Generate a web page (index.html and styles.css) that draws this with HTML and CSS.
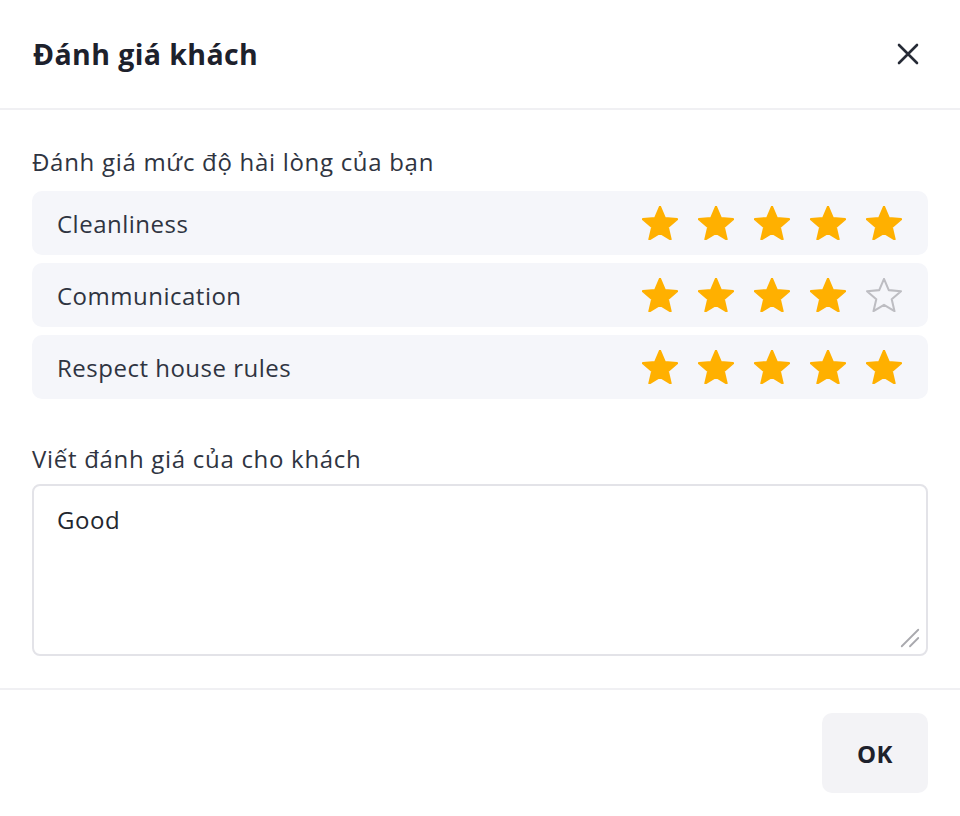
FILE: index.html
```html
<!DOCTYPE html>
<html lang="vi">
<head>
<meta charset="utf-8">
<link rel="stylesheet" href="styles.css">
</head>
<body>
<div class="dialog">
  <header class="head">
    <h1 class="title">Đánh giá khách</h1>
    <button class="close" aria-label="Đóng">
      <svg width="24" height="24" viewBox="0 0 24 24"><path d="M3 3L21 21M21 3L3 21" stroke="#262b36" stroke-width="2.6" stroke-linecap="round" fill="none"/></svg>
    </button>
  </header>
  <main class="body">
    <div class="label">Đánh giá mức độ hài lòng của bạn</div>
    <div class="rows">
      <div class="row"><span>Cleanliness</span>
        <div class="stars">
          <svg class="star on" viewBox="1.5 1.5 21 20"><path d="M12 17.27L18.18 21l-1.64-7.03L22 9.24l-7.19-.61L12 2 9.19 8.63 2 9.24l5.46 4.73L5.82 21z"/></svg>
          <svg class="star on" viewBox="1.5 1.5 21 20"><path d="M12 17.27L18.18 21l-1.64-7.03L22 9.24l-7.19-.61L12 2 9.19 8.63 2 9.24l5.46 4.73L5.82 21z"/></svg>
          <svg class="star on" viewBox="1.5 1.5 21 20"><path d="M12 17.27L18.18 21l-1.64-7.03L22 9.24l-7.19-.61L12 2 9.19 8.63 2 9.24l5.46 4.73L5.82 21z"/></svg>
          <svg class="star on" viewBox="1.5 1.5 21 20"><path d="M12 17.27L18.18 21l-1.64-7.03L22 9.24l-7.19-.61L12 2 9.19 8.63 2 9.24l5.46 4.73L5.82 21z"/></svg>
          <svg class="star on" viewBox="1.5 1.5 21 20"><path d="M12 17.27L18.18 21l-1.64-7.03L22 9.24l-7.19-.61L12 2 9.19 8.63 2 9.24l5.46 4.73L5.82 21z"/></svg>
        </div>
      </div>
      <div class="row"><span>Communication</span>
        <div class="stars">
          <svg class="star on" viewBox="1.5 1.5 21 20"><path d="M12 17.27L18.18 21l-1.64-7.03L22 9.24l-7.19-.61L12 2 9.19 8.63 2 9.24l5.46 4.73L5.82 21z"/></svg>
          <svg class="star on" viewBox="1.5 1.5 21 20"><path d="M12 17.27L18.18 21l-1.64-7.03L22 9.24l-7.19-.61L12 2 9.19 8.63 2 9.24l5.46 4.73L5.82 21z"/></svg>
          <svg class="star on" viewBox="1.5 1.5 21 20"><path d="M12 17.27L18.18 21l-1.64-7.03L22 9.24l-7.19-.61L12 2 9.19 8.63 2 9.24l5.46 4.73L5.82 21z"/></svg>
          <svg class="star on" viewBox="1.5 1.5 21 20"><path d="M12 17.27L18.18 21l-1.64-7.03L22 9.24l-7.19-.61L12 2 9.19 8.63 2 9.24l5.46 4.73L5.82 21z"/></svg>
          <svg class="star off" viewBox="1.5 1.5 21 20"><path d="M12 17.27L18.18 21l-1.64-7.03L22 9.24l-7.19-.61L12 2 9.19 8.63 2 9.24l5.46 4.73L5.82 21z"/></svg>
        </div>
      </div>
      <div class="row"><span>Respect house rules</span>
        <div class="stars">
          <svg class="star on" viewBox="1.5 1.5 21 20"><path d="M12 17.27L18.18 21l-1.64-7.03L22 9.24l-7.19-.61L12 2 9.19 8.63 2 9.24l5.46 4.73L5.82 21z"/></svg>
          <svg class="star on" viewBox="1.5 1.5 21 20"><path d="M12 17.27L18.18 21l-1.64-7.03L22 9.24l-7.19-.61L12 2 9.19 8.63 2 9.24l5.46 4.73L5.82 21z"/></svg>
          <svg class="star on" viewBox="1.5 1.5 21 20"><path d="M12 17.27L18.18 21l-1.64-7.03L22 9.24l-7.19-.61L12 2 9.19 8.63 2 9.24l5.46 4.73L5.82 21z"/></svg>
          <svg class="star on" viewBox="1.5 1.5 21 20"><path d="M12 17.27L18.18 21l-1.64-7.03L22 9.24l-7.19-.61L12 2 9.19 8.63 2 9.24l5.46 4.73L5.82 21z"/></svg>
          <svg class="star on" viewBox="1.5 1.5 21 20"><path d="M12 17.27L18.18 21l-1.64-7.03L22 9.24l-7.19-.61L12 2 9.19 8.63 2 9.24l5.46 4.73L5.82 21z"/></svg>
        </div>
      </div>
    </div>
    <div class="label label2">Viết đánh giá của cho khách</div>
    <div class="field">
      <textarea class="review">Good</textarea>
      <svg class="grip" width="24" height="24" viewBox="0 0 24 24"><path d="M3 21L21 3M12 21L21 12" stroke="#a9a9ae" stroke-width="2" stroke-linecap="round" fill="none"/></svg>
    </div>
  </main>
  <footer class="foot">
    <button class="ok">OK</button>
  </footer>
</div>
</body>
</html>
```
FILE: styles.css
```css
html, body {
  margin: 0;
  padding: 0;
  background: #ffffff;
}
body {
  font-family: "Open Sans", "Lato", sans-serif;
  color: #2f3441;
}
.dialog {
  width: 960px;
  height: 816px;
  display: flex;
  flex-direction: column;
  box-sizing: border-box;
}
.head {
  display: flex;
  align-items: center;
  justify-content: space-between;
  height: 110px;
  padding: 0 32px 0 33px;
  border-bottom: 2px solid #f0f0f3;
  box-sizing: border-box;
}
.title {
  margin: 0;
  font-size: 28.5px;
  font-weight: 700;
  letter-spacing: 0.4px;
  color: #1d212c;
}
.close {
  border: 0;
  background: none;
  padding: 0;
  width: 24px;
  height: 24px;
  margin-right: 8px;
  cursor: pointer;
}
.body {
  padding: 36px 32px 0 32px;
  flex: 1;
  display: flex;
  flex-direction: column;
  border-bottom: 2px solid #f0f0f3;
}
.label {
  font-size: 24px;
  line-height: 32px;
  letter-spacing: 0.7px;
  color: #2f3441;
  margin-bottom: 13px;
}
.label2 {
  margin-top: 44px;
  margin-bottom: 9px;
}
.rows {
  display: flex;
  flex-direction: column;
  gap: 8px;
}
.row {
  display: flex;
  align-items: center;
  justify-content: space-between;
  height: 64px;
  padding: 0 26px 0 25px;
  background: #f5f6fa;
  border-radius: 10px;
  font-size: 24px;
  letter-spacing: 0.5px;
  color: #2f3441;
}
.stars {
  display: flex;
  gap: 20px;
}
.star {
  width: 36px;
  height: 34px;
  display: block;
}
.star.on path {
  fill: #ffb000;
  stroke: #ffb000;
  stroke-width: 1.4;
  stroke-linejoin: round;
}
.star.off path {
  fill: none;
  stroke: #bdbdc2;
  stroke-width: 1.2;
  stroke-linejoin: round;
}
.field {
  position: relative;
}
.review {
  display: block;
  width: 100%;
  height: 172px;
  box-sizing: border-box;
  border: 2px solid #e3e3e8;
  border-radius: 8px;
  padding: 18px 23px;
  font-family: inherit;
  font-size: 24px;
  line-height: 32px;
  letter-spacing: 0.6px;
  color: #23272f;
  resize: none;
  outline: none;
}
.grip {
  position: absolute;
  right: 7px;
  bottom: 7px;
  width: 22px;
  height: 22px;
}
.foot {
  height: 126px;
  display: flex;
  justify-content: flex-end;
  align-items: center;
  padding: 0 32px;
  box-sizing: border-box;
}
.ok {
  width: 106px;
  height: 80px;
  border: 0;
  border-radius: 10px;
  background: #f3f3f6;
  font-family: inherit;
  font-size: 24px;
  font-weight: 700;
  letter-spacing: 0.5px;
  color: #1d212c;
}
```
